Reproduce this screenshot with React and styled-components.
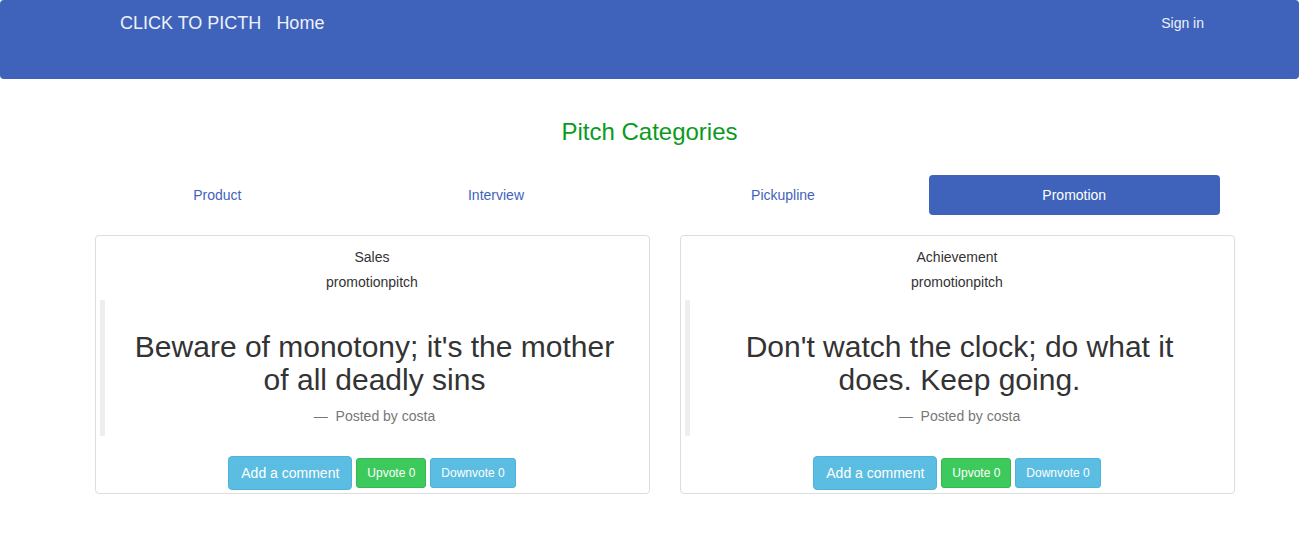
import React from "react";
import styled, { createGlobalStyle } from "styled-components";

const Global = createGlobalStyle`
  * { box-sizing: border-box; }
  body {
    margin: 0;
    font-family: "Liberation Sans", Arial, Helvetica, sans-serif;
    font-size: 14px;
    line-height: 20px;
    color: #333;
    background: #fff;
  }
`;

const NavBar = styled.nav`
  height: 79px;
  background: #3f63bb;
  border-radius: 4px;
  display: flex;
  align-items: flex-start;
  padding: 13px 95px 0 120px;
  color: #f2f2f2;
`;

const NavItem = styled.a`
  font-size: ${(p) => (p.$small ? "14px" : "18px")};
  line-height: 20px;
  color: #eef1fa;
  text-decoration: none;
  margin-right: ${(p) => (p.$gap ? "15px" : "0")};
  margin-left: ${(p) => (p.$push ? "auto" : "0")};
`;

const Title = styled.h3`
  margin: 40px 0 0;
  text-align: center;
  font-size: 24px;
  line-height: 1.1;
  font-weight: 400;
  color: #0b9a1e;
`;

const Pills = styled.ul`
  list-style: none;
  margin: 30px auto 0;
  padding: 0;
  width: 1140px;
  display: grid;
  grid-template-columns: 275.5px 282px 292px 290.5px;
`;

const Pill = styled.li`
  height: 40px;
  display: flex;
  align-items: center;
  justify-content: center;
  border-radius: 4px;
  font-size: 14px;
  color: ${(p) => (p.$active ? "#fff" : "#3f63bb")};
  background: ${(p) => (p.$active ? "#3f63bb" : "transparent")};
`;

const CardsRow = styled.div`
  margin: 20px 0 0 95px;
  display: grid;
  grid-template-columns: 555px 555px;
  column-gap: 30px;
`;

const Card = styled.div`
  border: 1px solid #ddd;
  border-radius: 4px;
  padding: 11px 5px 3px 4px;
  display: flex;
  flex-direction: column;
  align-items: stretch;
`;

const CardLine = styled.div`
  text-align: center;
  line-height: 20px;
  margin-bottom: ${(p) => p.$mb || 0}px;
`;

const Quote = styled.blockquote`
  margin: 0 0 20px;
  padding: 10px 20px;
  border-left: 5px solid #eee;
  text-align: center;
`;

const QuoteText = styled.h2`
  margin: 20px 0 10px;
  font-size: 30px;
  line-height: 33px;
  font-weight: 400;
  color: #333;
`;

const QuoteFooter = styled.footer`
  font-size: 14px;
  line-height: 20px;
  color: #777;
  &::before {
    content: "\\2014\\00A0\\00A0";
  }
`;

const Actions = styled.div`
  display: flex;
  justify-content: center;
  align-items: center;
  gap: 4px;
`;

const Btn = styled.button`
  font-family: inherit;
  border-radius: ${(p) => (p.$sm ? "3px" : "4px")};
  font-size: ${(p) => (p.$sm ? "12px" : "14px")};
  line-height: ${(p) => (p.$sm ? "18px" : "20px")};
  padding: ${(p) => (p.$sm ? "5px 10px" : "6px 12px")};
  color: #fff;
  background: ${(p) => (p.$success ? "#3cca5c" : "#5bbde2")};
  border: 1px solid ${(p) => (p.$success ? "#34b952" : "#4cb4dc")};
  cursor: pointer;
`;

const cards = [
  { title: "Sales", text: "Beware of monotony; it's the mother of all deadly sins" },
  { title: "Achievement", text: "Don't watch the clock; do what it does. Keep going." },
];

export default function App() {
  return (
    <>
      <Global />
      <NavBar>
        <NavItem $gap>CLICK TO PICTH</NavItem>
        <NavItem>Home</NavItem>
        <NavItem $small $push>Sign in</NavItem>
      </NavBar>
      <Title>Pitch Categories</Title>
      <Pills>
        <Pill>Product</Pill>
        <Pill>Interview</Pill>
        <Pill>Pickupline</Pill>
        <Pill $active>Promotion</Pill>
      </Pills>
      <CardsRow>
        {cards.map((c) => (
          <Card key={c.title}>
            <CardLine $mb={5}>{c.title}</CardLine>
            <CardLine $mb={8}>promotionpitch</CardLine>
            <Quote>
              <QuoteText>{c.text}</QuoteText>
              <QuoteFooter>Posted by costa</QuoteFooter>
            </Quote>
            <Actions>
              <Btn>Add a comment</Btn>
              <Btn $sm $success>Upvote 0</Btn>
              <Btn $sm>Downvote 0</Btn>
            </Actions>
          </Card>
        ))}
      </CardsRow>
    </>
  );
}
